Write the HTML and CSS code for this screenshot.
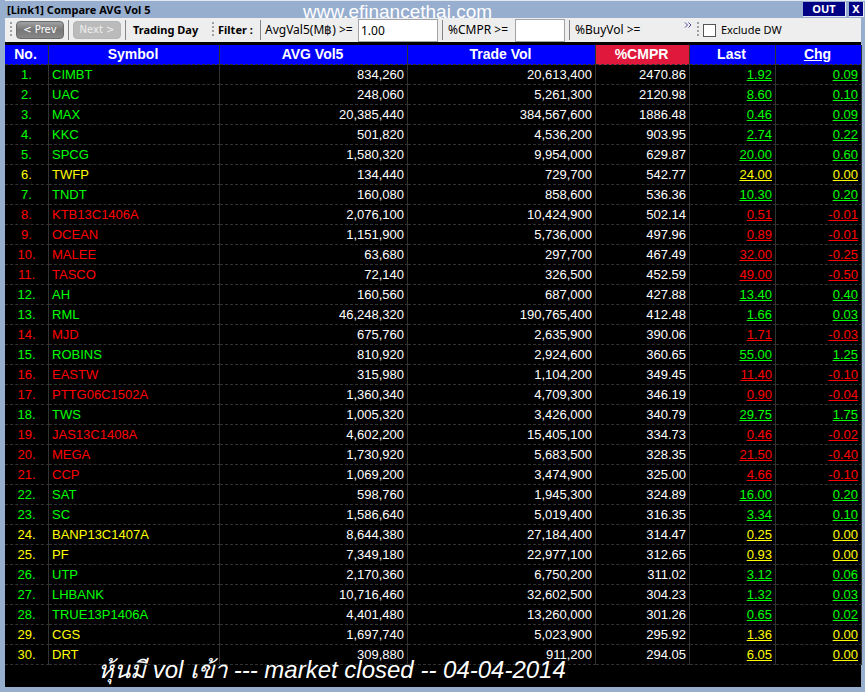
FILE: index.html
```html
<!DOCTYPE html>
<html lang="en">
<head>
<meta charset="utf-8">
<title>[Link1] Compare AVG Vol 5</title>
<link rel="stylesheet" href="styles.css">
</head>
<body>
<main class="window">
<header class="titlebar">
<h1 class="title">[Link1] Compare AVG Vol 5</h1>
<button class="winbtn out" type="button">OUT</button>
<button class="winbtn close" type="button">X</button>
<div class="watermark">www.efinancethai.com</div>
</header>
<div class="content">
<form class="toolbar">
<span class="grip"></span>
<button class="nav" type="button">&lt;&nbsp;Prev</button>
<span class="sep"></span>
<button class="nav next" type="button" disabled>Next&nbsp;&gt;</button>
<span class="sep"></span>
<b class="day">Trading Day</b>
<span class="grip"></span>
<b class="filter">Filter :</b>
<span class="sep"></span>
<label class="lbl-avg" for="avg">AvgVal5(M฿) &gt;=</label>
<input class="field wide" id="avg" type="text" value="1.00">
<span class="sep"></span>
<label class="lbl-cmpr" for="cmpr">%CMPR &gt;=</label>
<input class="field" id="cmpr" type="text">
<span class="sep"></span>
<span class="lbl-buy">%BuyVol &gt;=</span>
<button class="more" type="button" aria-label="More"><svg width="8" height="6" viewBox="0 0 8 6"><path d="M1 0.5 3.5 3 1 5.500M4.500 0.500 7 3 4.500 5.500" fill="none" stroke="#4a4a9c" stroke-width="1"/></svg></button>
<span class="grip"></span>
<label class="check"><input type="checkbox">Exclude DW</label>
</form>
<table class="quotes">
<colgroup><col class="c-no"><col class="c-sym"><col class="c-vol"><col class="c-vol"><col class="c-cmpr"><col class="c-price"><col class="c-price"></colgroup>
<thead><tr><th>No.</th><th>Symbol</th><th>AVG Vol5</th><th>Trade Vol</th><th class="sorted">%CMPR</th><th>Last</th><th><u>Chg</u></th></tr></thead>
<tbody>
<tr class="up"><td>1.</td><td>CIMBT</td><td>834,260</td><td>20,613,400</td><td>2470.86</td><td>1.92</td><td>0.09</td></tr>
<tr class="up"><td>2.</td><td>UAC</td><td>248,060</td><td>5,261,300</td><td>2120.98</td><td>8.60</td><td>0.10</td></tr>
<tr class="up"><td>3.</td><td>MAX</td><td>20,385,440</td><td>384,567,600</td><td>1886.48</td><td>0.46</td><td>0.09</td></tr>
<tr class="up"><td>4.</td><td>KKC</td><td>501,820</td><td>4,536,200</td><td>903.95</td><td>2.74</td><td>0.22</td></tr>
<tr class="up"><td>5.</td><td>SPCG</td><td>1,580,320</td><td>9,954,000</td><td>629.87</td><td>20.00</td><td>0.60</td></tr>
<tr class="flat"><td>6.</td><td>TWFP</td><td>134,440</td><td>729,700</td><td>542.77</td><td>24.00</td><td>0.00</td></tr>
<tr class="up"><td>7.</td><td>TNDT</td><td>160,080</td><td>858,600</td><td>536.36</td><td>10.30</td><td>0.20</td></tr>
<tr class="down"><td>8.</td><td>KTB13C1406A</td><td>2,076,100</td><td>10,424,900</td><td>502.14</td><td>0.51</td><td>-0.01</td></tr>
<tr class="down"><td>9.</td><td>OCEAN</td><td>1,151,900</td><td>5,736,000</td><td>497.96</td><td>0.89</td><td>-0.01</td></tr>
<tr class="down"><td>10.</td><td>MALEE</td><td>63,680</td><td>297,700</td><td>467.49</td><td>32.00</td><td>-0.25</td></tr>
<tr class="down"><td>11.</td><td>TASCO</td><td>72,140</td><td>326,500</td><td>452.59</td><td>49.00</td><td>-0.50</td></tr>
<tr class="up"><td>12.</td><td>AH</td><td>160,560</td><td>687,000</td><td>427.88</td><td>13.40</td><td>0.40</td></tr>
<tr class="up"><td>13.</td><td>RML</td><td>46,248,320</td><td>190,765,400</td><td>412.48</td><td>1.66</td><td>0.03</td></tr>
<tr class="down"><td>14.</td><td>MJD</td><td>675,760</td><td>2,635,900</td><td>390.06</td><td>1.71</td><td>-0.03</td></tr>
<tr class="up"><td>15.</td><td>ROBINS</td><td>810,920</td><td>2,924,600</td><td>360.65</td><td>55.00</td><td>1.25</td></tr>
<tr class="down"><td>16.</td><td>EASTW</td><td>315,980</td><td>1,104,200</td><td>349.45</td><td>11.40</td><td>-0.10</td></tr>
<tr class="down"><td>17.</td><td>PTTG06C1502A</td><td>1,360,340</td><td>4,709,300</td><td>346.19</td><td>0.90</td><td>-0.04</td></tr>
<tr class="up"><td>18.</td><td>TWS</td><td>1,005,320</td><td>3,426,000</td><td>340.79</td><td>29.75</td><td>1.75</td></tr>
<tr class="down"><td>19.</td><td>JAS13C1408A</td><td>4,602,200</td><td>15,405,100</td><td>334.73</td><td>0.46</td><td>-0.02</td></tr>
<tr class="down"><td>20.</td><td>MEGA</td><td>1,730,920</td><td>5,683,500</td><td>328.35</td><td>21.50</td><td>-0.40</td></tr>
<tr class="down"><td>21.</td><td>CCP</td><td>1,069,200</td><td>3,474,900</td><td>325.00</td><td>4.66</td><td>-0.10</td></tr>
<tr class="up"><td>22.</td><td>SAT</td><td>598,760</td><td>1,945,300</td><td>324.89</td><td>16.00</td><td>0.20</td></tr>
<tr class="up"><td>23.</td><td>SC</td><td>1,586,640</td><td>5,019,400</td><td>316.35</td><td>3.34</td><td>0.10</td></tr>
<tr class="flat"><td>24.</td><td>BANP13C1407A</td><td>8,644,380</td><td>27,184,400</td><td>314.47</td><td>0.25</td><td>0.00</td></tr>
<tr class="flat"><td>25.</td><td>PF</td><td>7,349,180</td><td>22,977,100</td><td>312.65</td><td>0.93</td><td>0.00</td></tr>
<tr class="up"><td>26.</td><td>UTP</td><td>2,170,360</td><td>6,750,200</td><td>311.02</td><td>3.12</td><td>0.06</td></tr>
<tr class="up"><td>27.</td><td>LHBANK</td><td>10,716,460</td><td>32,602,500</td><td>304.23</td><td>1.32</td><td>0.03</td></tr>
<tr class="up"><td>28.</td><td>TRUE13P1406A</td><td>4,401,480</td><td>13,260,000</td><td>301.26</td><td>0.65</td><td>0.02</td></tr>
<tr class="flat"><td>29.</td><td>CGS</td><td>1,697,740</td><td>5,023,900</td><td>295.92</td><td>1.36</td><td>0.00</td></tr>
<tr class="flat"><td>30.</td><td>DRT</td><td>309,880</td><td>911,200</td><td>294.05</td><td>6.05</td><td>0.00</td></tr>
</tbody>
</table>
<p class="caption">หุ้นมี vol เข้า --- market closed -- 04-04-2014</p>
</div>
</main>
</body>
</html>
```
FILE: styles.css
```css
* { box-sizing: border-box; }
body { margin: 0; background: #98aecf; font-family: "Liberation Sans", Arial, sans-serif; }
.window { display: flex; flex-direction: column; min-height: 100vh; padding: 0 4px 5px 5px; position: relative; }
.titlebar { display: flex; align-items: center; height: 18px; border-top: 1px solid #dfe7f1; margin-right: -4px; }
.title { flex: 1; margin: 0; padding-left: 2px; font: bold 11px/16px "Noto Sans", sans-serif; color: #000; }
.winbtn { height: 15px; padding: 0; border: 1px solid #e4e8f0; border-width: 0 1px 1px 0; background: #000084; color: #fff; font: bold 11px/14px "Noto Sans", sans-serif; }
.out { width: 43px; margin-right: 3px; }
.close { width: 15px; margin-right: 1px; }
.watermark { position: absolute; top: 1px; left: 303px; color: #fff; font-size: 19px; line-height: 22px; }
.content { flex: 1; position: relative; background: #000; }
.toolbar { display: flex; align-items: center; height: 24px; margin-bottom: 3px; background: #eeeeee; color: #000; font: 11px/16px "Noto Sans", sans-serif; white-space: nowrap; overflow: hidden; }
.grip { width: 2px; height: 16px; margin: 0 4px 0 5px; flex: none; background: repeating-linear-gradient(#a0a0a0 0 2px, transparent 2px 4px); }
.sep { width: 1px; height: 20px; margin: 0 4px; flex: none; background: #858585; }
.nav { width: 48px; height: 18px; padding: 0; flex: none; border: 1px solid #6b6b6b; border-radius: 4px; background: linear-gradient(#a2a2a2, #777 50%, #888); color: #fff; font: 10px/14px "DejaVu Sans", sans-serif; }
.next { border-color: #b5b5b5; background: #bbb; color: #eee; }
.day { width: 77px; padding-left: 3px; }
.filter { width: 38px; }
.lbl-avg, .lbl-cmpr, .lbl-buy { flex: none; font-size: 12px; }
.lbl-avg { width: 93px; }
.lbl-cmpr { width: 68px; padding-left: 1px; }
.lbl-buy { width: 110px; padding-left: 1px; }
.field { width: 50px; height: 23px; padding: 0 2px; flex: none; border: 1px solid #a0a4a8; border-radius: 0; background: #fff; color: #000; font: 12px/16px "Noto Sans", sans-serif; }
.wide { width: 80px; }
.more { align-self: flex-start; display: flex; padding: 4px 0 0; border: 0; background: none; }
.check { display: flex; align-items: center; gap: 5px; }
.check input { appearance: none; width: 13px; height: 13px; margin: 0; border: 1px solid #555; background: #fff; }
.quotes { width: 100%; table-layout: fixed; border-collapse: separate; border-spacing: 0; font-size: 13px; line-height: 18px; color: #fff; }
.c-no { width: 44px; }
.c-sym { width: 171px; }
.c-vol { width: 188px; }
.c-cmpr { width: 94px; }
.c-price { width: 86px; }
.quotes th, .quotes td { height: 20px; padding: 1px 3px 0; border-right: 1px solid #303330; border-bottom: 1px dashed #303330; }
.quotes th { padding: 0 5px 1px 3px; background: #0000ff; font-size: 14px; text-align: center; }
.quotes .sorted { background: #e0183c; }
.quotes td { text-align: right; }
.quotes td:first-child { text-align: center; }
.quotes td:nth-child(2) { text-align: left; }
.up { --tone: #00ff00; }
.down { --tone: #ff0000; }
.flat { --tone: #ffff00; }
.quotes td:first-child, .quotes td:nth-child(2) { color: var(--tone); }
.quotes td:nth-child(n+6) { color: var(--tone); text-decoration: underline; }
.caption { position: absolute; left: 93px; bottom: 0; margin: 0; color: #fff; font-size: 24px; line-height: 34px; font-style: italic; white-space: nowrap; }
```
